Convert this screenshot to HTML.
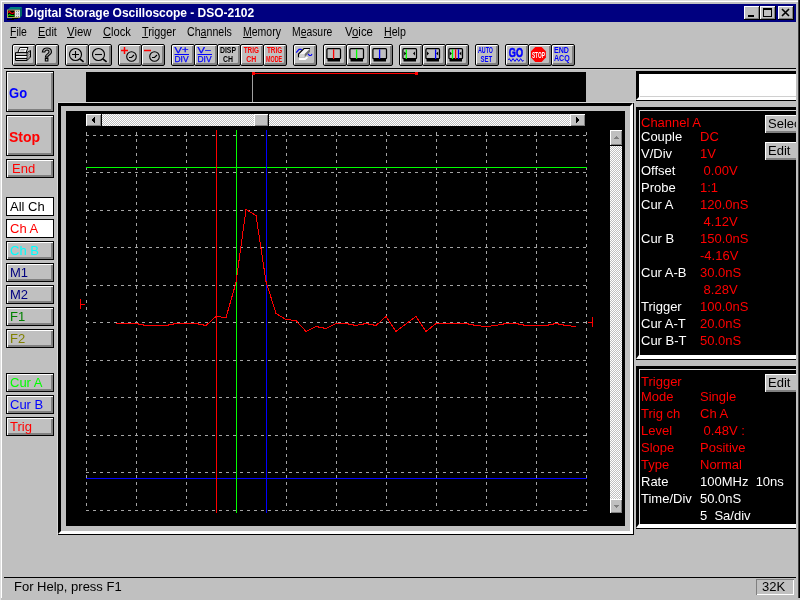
<!DOCTYPE html><html><head><meta charset="utf-8"><title>Digital Storage Oscilloscope - DSO-2102</title><style>
*{box-sizing:border-box;margin:0;padding:0}
html,body{width:800px;height:600px;overflow:hidden;background:#c0c0c0}
body{font-family:"Liberation Sans",sans-serif;position:relative;color:#000}
.abs{position:absolute}
#win{position:absolute;left:0;top:0;width:800px;height:600px;background:#c0c0c0;overflow:hidden;will-change:transform}
#title{position:absolute;left:4px;top:4px;width:792px;height:18px;background:#000080}
#title span{position:absolute;left:21px;letter-spacing:-0.025px;top:1px;font:bold 12px "Liberation Sans",sans-serif;color:#fff;white-space:nowrap;line-height:16px}
.cap{position:absolute;top:6px;width:16px;height:14px;background:#c0c0c0;
 box-shadow:inset -1px -1px 0 #000,inset 1px 1px 0 #fff,inset -2px -2px 0 #808080}
.mi{position:absolute;top:24px;height:16px;font:12px "Liberation Sans",sans-serif;line-height:16px;white-space:nowrap;transform-origin:0 0}
.mi u{text-decoration:underline}
.tb{position:absolute;top:44px;width:24px;height:22px;background:#c0c0c0;border:1px solid #000;border-radius:2px;
 box-shadow:inset 1px 1px 0 #fff,inset -1px -1px 0 #808080,inset -2px -2px 0 #808080}
.tb svg{position:absolute;left:0;top:0}
.lb{position:absolute;left:6px;width:48px;background:#c0c0c0;border:1px solid #000;
 box-shadow:inset 1px 1px 0 #fff,inset -1px -1px 0 #808080,inset -2px -2px 0 #808080;white-space:nowrap}
.lb.big{box-shadow:inset 1px 1px 0 #fff,inset -1px -1px 0 #808080,inset -2px -2px 0 #808080}
.lb.white{background:#fff;box-shadow:none}
.lb span{position:absolute;left:4px;transform-origin:0 0}
.pt{position:absolute;font:13px "Liberation Sans",sans-serif;line-height:16px;white-space:pre;color:#f00}
.pt.w{color:#fff}
.pb{position:absolute;background:#c0c0c0;height:18px;box-shadow:inset 1px 1px 0 #fff,inset 0 -2px 0 #808080;font:13px "Liberation Sans",sans-serif;line-height:17px;overflow:hidden;white-space:nowrap}
</style></head><body><div id="win">
<div class="abs" style="left:0px;top:0px;width:800px;height:1px;background:#dfdfdf"></div>
<div class="abs" style="left:0px;top:0px;width:1px;height:600px;background:#dfdfdf"></div>
<div class="abs" style="left:1px;top:1px;width:798px;height:1px;background:#fff"></div>
<div class="abs" style="left:1px;top:1px;width:1px;height:597px;background:#fff"></div>
<div id="title">
<svg class="abs" style="left:3px;top:3px" width="16" height="14" viewBox="7 7 16 14"><path d="M10.5 7 H22 L20 9.5 H7.5 Z" fill="#008080"/><path d="M20 9.5 L22 7 V15.5 L20 18 Z" fill="#006868"/><rect x="7" y="9.5" width="13" height="8.5" fill="#a8a860"/><rect x="8" y="10.5" width="6.5" height="6.5" fill="#000"/><path d="M8 12.5 L9.5 11.5 L11 13 L12.5 13.5 L14.5 12.5" stroke="#f00" stroke-width="1.1" fill="none"/><path d="M8 16 L9.5 14.5 L11 15.5 L12.5 15.5 L14.5 16" stroke="#0c0" stroke-width="1.1" fill="none"/><rect x="15" y="10.5" width="5" height="6.5" fill="#e0e0e0"/><path d="M16.5 11 V17 M18.5 11 V17" stroke="#808080" stroke-dasharray="1 1.5"/><path d="M7 19.5 H14 M12 18.5 H18" stroke="#000"/></svg>
<span>Digital Storage Oscilloscope - DSO-2102</span></div>
<div class="cap" style="left:744px"><div class="abs" style="left:4px;top:9px;width:6px;height:2px;background:#000"></div></div>
<div class="cap" style="left:760px"><div class="abs" style="left:3px;top:2px;width:9px;height:9px;border:1px solid #000;border-top-width:2px"></div></div>
<div class="cap" style="left:778px"><svg class="abs" style="left:0;top:0" width="16" height="14"><path d="M4 3 L11 10 M11 3 L4 10" stroke="#000" stroke-width="1.6"/></svg></div>
<div class="mi" style="left:10px;transform:scaleX(0.872)"><u>F</u>ile</div>
<div class="mi" style="left:38px;transform:scaleX(0.914)"><u>E</u>dit</div>
<div class="mi" style="left:67px;transform:scaleX(0.948)"><u>V</u>iew</div>
<div class="mi" style="left:103px;transform:scaleX(0.931)"><u>C</u>lock</div>
<div class="mi" style="left:142px;transform:scaleX(0.902)"><u>T</u>rigger</div>
<div class="mi" style="left:187px;transform:scaleX(0.885)">Ch<u>a</u>nnels</div>
<div class="mi" style="left:243px;transform:scaleX(0.875)"><u>M</u>emory</div>
<div class="mi" style="left:292px;transform:scaleX(0.864)">M<u>e</u>asure</div>
<div class="mi" style="left:345px;transform:scaleX(0.951)">V<u>o</u>ice</div>
<div class="mi" style="left:384px;transform:scaleX(0.886)"><u>H</u>elp</div>
<div class="tb" style="left:12px"><svg width="22" height="20" viewBox="0 0 22 20"><path d="M6.8 2.5 H15 L13 7.6 H4.8 Z" fill="#fff" stroke="#000"/><path d="M7.5 4.5 H12.5 M7 6 H11.5" stroke="#909090" stroke-width=".9"/><path d="M2.5 7.6 H14 L17.5 5.5 V12 L14 15.5 H2.5 Z" fill="#c0c0c0" stroke="#000"/><path d="M14 7.6 V15.5" stroke="#000"/><path d="M14.5 9 L17 7 M14.5 11 L17 9 M14.5 13 L17 11" stroke="#606060" stroke-width=".8"/><path d="M2.5 10.5 H14 M2.5 13.5 H14" stroke="#000"/><path d="M3 11.8 H13.5" stroke="#fff" stroke-width="1.4"/></svg></div>
<div class="tb" style="left:35px"><svg width="22" height="20" viewBox="0 0 22 20"><text x="11" y="16" text-anchor="middle" font-family="Liberation Sans, sans-serif" font-weight="bold" font-size="18" fill="#b0b0b0" stroke="#000" stroke-width="1.1">?</text></svg></div>
<div class="tb" style="left:65px"><svg width="22" height="20" viewBox="0 0 22 20"><circle cx="9.5" cy="9.5" r="6" fill="none" stroke="#000" stroke-width="1.1"/><path d="M13.8 13.8 L17.6 16.8" stroke="#000" stroke-width="1.7"/><path d="M6 9.5 H13 M9.5 6 V13" stroke="#000" stroke-width="1.1"/></svg></div>
<div class="tb" style="left:88px"><svg width="22" height="20" viewBox="0 0 22 20"><circle cx="9.5" cy="9.5" r="6" fill="none" stroke="#000" stroke-width="1.1"/><path d="M13.8 13.8 L17.6 16.8" stroke="#000" stroke-width="1.7"/><path d="M6 9.5 H13" stroke="#000" stroke-width="1.1"/></svg></div>
<div class="tb" style="left:118px"><svg width="22" height="20" viewBox="0 0 22 20"><circle cx="12.5" cy="11.5" r="4.8" fill="none" stroke="#000" stroke-width="1.1"/><path d="M10 12.5 H12.5 L15 10" fill="none" stroke="#000" stroke-width="1.1"/><path d="M2 5.5 H9 M5.5 2 V9" stroke="#f00" stroke-width="1.5"/></svg></div>
<div class="tb" style="left:141px"><svg width="22" height="20" viewBox="0 0 22 20"><circle cx="12.5" cy="11.5" r="4.8" fill="none" stroke="#000" stroke-width="1.1"/><path d="M10 12.5 H12.5 L15 10" fill="none" stroke="#000" stroke-width="1.1"/><path d="M2 5.5 H9" stroke="#f00" stroke-width="1.5"/></svg></div>
<div class="tb" style="left:171px"><svg width="22" height="20" viewBox="0 0 22 20"><text x="2.5" y="8" font-family="Liberation Sans, sans-serif" font-size="8.5" stroke="#00f" stroke-width="0.25" fill="#00f" textLength="14.0" lengthAdjust="spacingAndGlyphs">V+</text><path d="M2.5 9.5 H17" stroke="#00f"/><text x="2.5" y="17" font-family="Liberation Sans, sans-serif" font-size="8.5" stroke="#00f" stroke-width="0.25" fill="#00f" textLength="14.0" lengthAdjust="spacingAndGlyphs">DIV</text></svg></div>
<div class="tb" style="left:194px"><svg width="22" height="20" viewBox="0 0 22 20"><text x="2.5" y="8" font-family="Liberation Sans, sans-serif" font-size="8.5" stroke="#00f" stroke-width="0.25" fill="#00f" textLength="14.0" lengthAdjust="spacingAndGlyphs">V&#8722;</text><path d="M2.5 9.5 H17" stroke="#00f"/><text x="2.5" y="17" font-family="Liberation Sans, sans-serif" font-size="8.5" stroke="#00f" stroke-width="0.25" fill="#00f" textLength="14.0" lengthAdjust="spacingAndGlyphs">DIV</text></svg></div>
<div class="tb" style="left:217px"><svg width="22" height="20" viewBox="0 0 22 20"><text x="2" y="8" font-family="Liberation Sans, sans-serif" font-size="8.5" font-weight="bold" fill="#000" textLength="16" lengthAdjust="spacingAndGlyphs">DISP</text><text x="5" y="17" font-family="Liberation Sans, sans-serif" font-size="8.5" font-weight="bold" fill="#000" textLength="10" lengthAdjust="spacingAndGlyphs">CH</text></svg></div>
<div class="tb" style="left:240px"><svg width="22" height="20" viewBox="0 0 22 20"><text x="2.7" y="8" font-family="Liberation Sans, sans-serif" font-size="8.5" font-weight="bold" fill="#f00" textLength="15.3" lengthAdjust="spacingAndGlyphs">TRIG</text><text x="5.2" y="17" font-family="Liberation Sans, sans-serif" font-size="8.5" font-weight="bold" fill="#f00" textLength="10.0" lengthAdjust="spacingAndGlyphs">CH</text></svg></div>
<div class="tb" style="left:263px"><svg width="22" height="20" viewBox="0 0 22 20"><text x="2.9" y="8" font-family="Liberation Sans, sans-serif" font-size="8.5" font-weight="bold" fill="#f00" textLength="15.299999999999999" lengthAdjust="spacingAndGlyphs">TRIG</text><text x="2" y="17" font-family="Liberation Sans, sans-serif" font-size="8.5" font-weight="bold" fill="#f00" textLength="16.2" lengthAdjust="spacingAndGlyphs">MODE</text></svg></div>
<div class="tb" style="left:293px"><svg width="22" height="20" viewBox="0 0 22 20"><path d="M2.2 7.6 L5 4.3 H7 L8.2 5.6" fill="none" stroke="#00f" stroke-width="1.2"/><path d="M14 8.8 L15.4 10.5 H17 L18 9" fill="none" stroke="#00f" stroke-width="1.2"/><path d="M5 14 H11 L13.5 12" stroke="#fff" stroke-width="2" fill="none"/><path d="M10.5 9 L16 3.5 V6.8 L10.5 12.3 Z" fill="#707070"/><path d="M4.5 9 H10.5 V12.3 H4.5 Z" fill="#d4d4d4"/><path d="M10 3.5 H16 L10.5 9 H4.5 Z" fill="#f4f4f4"/><path d="M16 3.5 H10 L4.5 9 V12.3" fill="none" stroke="#000" stroke-width="1.1"/></svg></div>
<div class="tb" style="left:323px"><svg width="22" height="20" viewBox="0 0 22 20"><rect x="2.9" y="3.7" width="13.6" height="10" rx="1" fill="#c0c0c0" stroke="#000" stroke-width="1.25"/><path d="M3.5 14 H16 V16.5 H3.5 Z" fill="#000"/><path d="M9.6 4.4 V14" stroke="#f00" stroke-width="1.3"/></svg></div>
<div class="tb" style="left:346px"><svg width="22" height="20" viewBox="0 0 22 20"><rect x="2.9" y="3.7" width="13.6" height="10" rx="1" fill="#c0c0c0" stroke="#000" stroke-width="1.25"/><path d="M3.5 14 H16 V16.5 H3.5 Z" fill="#000"/><path d="M9.6 4.4 V14" stroke="#0f0" stroke-width="1.3"/></svg></div>
<div class="tb" style="left:369px"><svg width="22" height="20" viewBox="0 0 22 20"><rect x="2.9" y="3.7" width="13.6" height="10" rx="1" fill="#c0c0c0" stroke="#000" stroke-width="1.25"/><path d="M3.5 14 H16 V16.5 H3.5 Z" fill="#000"/><path d="M9.6 4.4 V14" stroke="#00f" stroke-width="1.3"/></svg></div>
<div class="tb" style="left:399px"><svg width="22" height="20" viewBox="0 0 22 20"><rect x="2.9" y="3.7" width="13.6" height="10" rx="1" fill="#c0c0c0" stroke="#000" stroke-width="1.25"/><path d="M3.5 14 H16 V16.5 H3.5 Z" fill="#000"/><path d="M6.3 4.4 V14" stroke="#0f0" stroke-width="1.3"/><path d="M4.2 6.5 V10.5 L6.2 8.5 Z" fill="#000"/><path d="M15 6.5 V10.5 L13 8.5 Z" fill="#000"/></svg></div>
<div class="tb" style="left:422px"><svg width="22" height="20" viewBox="0 0 22 20"><rect x="2.9" y="3.7" width="13.6" height="10" rx="1" fill="#c0c0c0" stroke="#000" stroke-width="1.25"/><path d="M3.5 14 H16 V16.5 H3.5 Z" fill="#000"/><path d="M12.6 4.4 V14" stroke="#00f" stroke-width="1.3"/><path d="M4 6.5 V10.5 L6 8.5 Z" fill="#000"/><path d="M15.2 6.5 V10.5 L13.2 8.5 Z" fill="#000"/></svg></div>
<div class="tb" style="left:445px"><svg width="22" height="20" viewBox="0 0 22 20"><rect x="2.9" y="3.7" width="13.6" height="10" rx="1" fill="#c0c0c0" stroke="#000" stroke-width="1.25"/><path d="M3.5 14 H16 V16.5 H3.5 Z" fill="#000"/><path d="M6.5 4.4 V14" stroke="#0f0" stroke-width="1.3"/><path d="M9.6 4.4 V14" stroke="#f00" stroke-width="1.3"/><path d="M12.5 4.4 V14" stroke="#00f" stroke-width="1.3"/><path d="M3.8 6.5 V10.5 L5.8 8.5 Z" fill="#000"/><path d="M15.3 6.5 V10.5 L13.3 8.5 Z" fill="#000"/></svg></div>
<div class="tb" style="left:475px"><svg width="22" height="20" viewBox="0 0 22 20"><text x="2" y="8" font-family="Liberation Sans, sans-serif" font-size="8.5" font-weight="bold" fill="#00f" textLength="15" lengthAdjust="spacingAndGlyphs">AUTO</text><text x="4.6" y="17" font-family="Liberation Sans, sans-serif" font-size="8.5" font-weight="bold" fill="#00f" textLength="11.6" lengthAdjust="spacingAndGlyphs">SET</text></svg></div>
<div class="tb" style="left:505px"><svg width="22" height="20" viewBox="0 0 22 20"><text x="2.8" y="12.1" font-family="Liberation Sans, sans-serif" font-size="12.3" font-weight="bold" fill="#00f" textLength="14.2" lengthAdjust="spacingAndGlyphs" stroke="#00f" stroke-width="0.6">GO</text><path d="M2.3 15 q0.95 -2.8 1.9 0 t1.9 0 t1.9 0 t1.9 0 t1.9 0 t1.9 0 t1.9 0 t1.9 0" fill="none" stroke="#00f" stroke-width="1"/></svg></div>
<div class="tb" style="left:528px"><svg width="22" height="20" viewBox="0 0 22 20"><path d="M6.3 1.9 H12.6 L16.9 6.3 V12.6 L12.6 17 H6.3 L2 12.6 V6.3 Z" fill="#f00"/><text x="2.9" y="12.6" font-family="Liberation Sans, sans-serif" font-size="8.8" font-weight="bold" fill="#fff" textLength="13.0" lengthAdjust="spacingAndGlyphs">STOP</text></svg></div>
<div class="tb" style="left:551px"><svg width="22" height="20" viewBox="0 0 22 20"><text x="2" y="8" font-family="Liberation Sans, sans-serif" font-size="8.5" font-weight="bold" fill="#00f" textLength="15" lengthAdjust="spacingAndGlyphs">END</text><text x="2" y="16" font-family="Liberation Sans, sans-serif" font-size="8.5" font-weight="bold" fill="#00f" textLength="15.7" lengthAdjust="spacingAndGlyphs">ACQ</text></svg></div>
<div class="abs" style="left:4px;top:68px;width:792px;height:1px;background:#000"></div>
<div class="abs" style="left:4px;top:69px;width:792px;height:1px;background:#d0d0d0"></div>
<div class="lb big" style="top:71px;height:41px"><span style="top:13px;left:2px;color:#00f;font:bold 14px 'Liberation Sans',sans-serif;line-height:16px;transform:scaleX(0.93)">Go</span></div>
<div class="lb big" style="top:115px;height:41px"><span style="top:13px;left:2px;color:#f00;font:bold 14px 'Liberation Sans',sans-serif;line-height:16px">Stop</span></div>
<div class="lb" style="top:159px;height:19px"><span style="top:1px;left:5px;color:#f00;font:13px 'Liberation Sans',sans-serif;line-height:16px">End</span></div>
<div class="lb white" style="top:197px;height:19px"><span style="top:1px;left:3px;color:#000;font:13px 'Liberation Sans',sans-serif;line-height:16px">All Ch</span></div>
<div class="lb white" style="top:219px;height:19px"><span style="top:1px;left:3px;color:#f00;font:13px 'Liberation Sans',sans-serif;line-height:16px">Ch A</span></div>
<div class="lb" style="top:241px;height:19px"><span style="top:1px;left:3px;color:#0ff;font:13px 'Liberation Sans',sans-serif;line-height:16px">Ch B</span></div>
<div class="lb" style="top:263px;height:19px"><span style="top:1px;left:3px;color:#000080;font:13px 'Liberation Sans',sans-serif;line-height:16px">M1</span></div>
<div class="lb" style="top:285px;height:19px"><span style="top:1px;left:3px;color:#000080;font:13px 'Liberation Sans',sans-serif;line-height:16px">M2</span></div>
<div class="lb" style="top:307px;height:19px"><span style="top:1px;left:3px;color:#008000;font:13px 'Liberation Sans',sans-serif;line-height:16px">F1</span></div>
<div class="lb" style="top:329px;height:19px"><span style="top:1px;left:3px;color:#808000;font:13px 'Liberation Sans',sans-serif;line-height:16px">F2</span></div>
<div class="lb" style="top:373px;height:19px"><span style="top:1px;left:3px;color:#0f0;font:13px 'Liberation Sans',sans-serif;line-height:16px">Cur A</span></div>
<div class="lb" style="top:395px;height:19px"><span style="top:1px;left:3px;color:#00f;font:13px 'Liberation Sans',sans-serif;line-height:16px">Cur B</span></div>
<div class="lb" style="top:417px;height:19px"><span style="top:1px;left:3px;color:#f00;font:13px 'Liberation Sans',sans-serif;line-height:16px">Trig</span></div>
<div class="abs" style="left:86px;top:72px;width:500px;height:30px;background:#000"></div>
<div class="abs" style="left:252px;top:73px;width:1px;height:29px;background:#a0a0a0"></div>
<div class="abs" style="left:252px;top:73px;width:166px;height:1px;background:#f00"></div>
<div class="abs" style="left:252px;top:72px;width:3px;height:3px;background:#f00"></div>
<div class="abs" style="left:415px;top:72px;width:3px;height:3px;background:#f00"></div>
<div class="abs" style="left:636px;top:71px;width:164px;height:29px;background:#fff;border-left:3px solid #000;border-top:3px solid #000;border-bottom:3px solid #fff"></div>
<div class="abs" style="left:640px;top:96px;width:160px;height:1px;background:#d0d0d0"></div>
<div class="abs" style="left:636px;top:100px;width:164px;height:1px;background:#000"></div>
<div class="abs" style="left:58px;top:102px;width:577px;height:1px;background:#d8d8d8"></div>
<div class="abs" style="left:57px;top:103px;width:1px;height:432px;background:#d8d8d8"></div>
<div class="abs" style="left:58px;top:103px;width:576px;height:432px;background:#000"></div>
<div class="abs" style="left:58px;top:103px;width:575px;height:431px;background:#c0c0c0;border:3px solid #000;border-right-color:#fff;border-bottom-color:#fff"></div>
<div class="abs" style="left:66px;top:111px;width:559px;height:415px;background:#000"></div>
<svg class="abs" style="left:66px;top:111px" width="559" height="415" viewBox="66 111 559 415" shape-rendering="crispEdges"><defs><pattern id="ck" width="2" height="2" patternUnits="userSpaceOnUse"><rect width="2" height="2" fill="#c0c0c0"/><rect width="1" height="1" fill="#fff"/><rect x="1" y="1" width="1" height="1" fill="#fff"/></pattern></defs><rect x="102" y="114" width="152" height="12" fill="url(#ck)"/><rect x="269" y="114" width="301" height="12" fill="url(#ck)"/><rect x="86" y="114" width="15" height="12" fill="#c0c0c0"/><path d="M86.5 125.5 V114.5 H100.5" stroke="#fff" fill="none"/><path d="M86.5 125.5 H100.5 V114.5" stroke="#808080" fill="none"/><path d="M95 117 V123 L91 120 Z" fill="#000"/><rect x="570" y="114" width="15" height="12" fill="#c0c0c0"/><path d="M570.5 125.5 V114.5 H584.5" stroke="#fff" fill="none"/><path d="M570.5 125.5 H584.5 V114.5" stroke="#808080" fill="none"/><path d="M576 117 V123 L580 120 Z" fill="#000"/><rect x="254" y="114" width="14" height="12" fill="#c0c0c0"/><path d="M254.5 125.5 V114.5 H267.5" stroke="#fff" fill="none"/><path d="M254.5 125.5 H267.5 V114.5" stroke="#808080" fill="none"/><rect x="610" y="146" width="12" height="353" fill="url(#ck)"/><rect x="610" y="130" width="12" height="15" fill="#c0c0c0"/><path d="M610.5 144.5 V130.5 H621.5" stroke="#fff" fill="none"/><path d="M610.5 144.5 H621.5 V130.5" stroke="#808080" fill="none"/><path d="M613 139 H619 L616 136 Z" fill="#808080"/><rect x="610" y="499" width="12" height="14" fill="#c0c0c0"/><path d="M610.5 512.5 V499.5 H621.5" stroke="#fff" fill="none"/><path d="M610.5 512.5 H621.5 V499.5" stroke="#808080" fill="none"/><path d="M613 505 H619 L616 508 Z" fill="#808080"/><g stroke="#a4a4a4" stroke-width="1" stroke-dasharray="3 4" fill="none"><path d="M86.5 132 V511"/><path d="M136.5 132 V511"/><path d="M186.5 132 V511"/><path d="M236.5 132 V511"/><path d="M286.5 132 V511"/><path d="M336.5 132 V511"/><path d="M386.5 132 V511"/><path d="M436.5 132 V511"/><path d="M486.5 132 V511"/><path d="M536.5 132 V511"/><path d="M586.5 132 V511"/><path d="M86 135.5 H587"/><path d="M86 172.5 H587"/><path d="M86 210.5 H587"/><path d="M86 247.5 H587"/><path d="M86 285.5 H587"/><path d="M86 322.5 H587"/><path d="M86 360.5 H587"/><path d="M86 397.5 H587"/><path d="M86 435.5 H587"/><path d="M86 472.5 H587"/><path d="M86 510.5 H587"/></g><path d="M86 167.5 H587" stroke="#0f0"/><path d="M86 478.5 H587" stroke="#00f"/><path d="M216.5 130 V513" stroke="#f00"/><path d="M236.5 130 V513" stroke="#0f0"/><path d="M266.5 130 V513" stroke="#00f"/><path d="M80.5 299 V309 M80 304.5 H85" stroke="#f00"/><path d="M592.5 317 V327 M588 322.5 H592" stroke="#f00"/><polyline points="116,323.5 126,323.5 136,323.5 146,325.5 156,325.5 166,325.5 176,323.5 186,323.5 196,323.5 206,325.5 216,316.5 226,317.5 236,282.5 246,209.5 256,215.5 266,281.5 276,313.5 286,319.5 296,320.5 306,331.5 316,326.5 326,328.5 336,323.5 346,323.5 356,325.5 366,323.5 376,325.5 386,316.5 396,331.5 406,324.0 416,316.5 426,331.5 436,323.5 446,323.5 456,323.5 466,323.5 476,325.5 486,326.5 496,325.5 506,323.5 516,323.5 526,325.5 536,325.5 546,325.5 556,323.5 566,325.5 576,326.5" fill="none" stroke="#f00" stroke-width="1"/></svg>
<div class="abs" style="left:636px;top:107px;width:164px;height:252px;background:#000;border-left:3px solid #000;border-top:3px solid #000;border-bottom:4px solid #fff"></div>
<div class="abs" style="left:639px;top:110px;width:161px;height:1px;background:#d8d8d8"></div>
<div class="abs" style="left:639px;top:110px;width:1px;height:245px;background:#d8d8d8"></div>
<div class="abs" style="left:636px;top:359px;width:164px;height:1px;background:#000"></div>
<div class="abs" style="left:636px;top:366px;width:164px;height:162px;background:#000;border-left:3px solid #000;border-top:3px solid #000;border-bottom:4px solid #fff"></div>
<div class="abs" style="left:639px;top:369px;width:161px;height:1px;background:#d8d8d8"></div>
<div class="abs" style="left:639px;top:369px;width:1px;height:155px;background:#d8d8d8"></div>
<div class="abs" style="left:636px;top:528px;width:164px;height:1px;background:#000"></div>
<div class="pt" style="left:641px;top:115px">Channel A</div>
<div class="pt w" style="left:641px;top:129px">Couple</div>
<div class="pt" style="left:700px;top:129px">DC</div>
<div class="pt w" style="left:641px;top:146px">V/Div</div>
<div class="pt" style="left:700px;top:146px">1V</div>
<div class="pt w" style="left:641px;top:163px">Offset</div>
<div class="pt" style="left:700px;top:163px"> 0.00V</div>
<div class="pt w" style="left:641px;top:180px">Probe</div>
<div class="pt" style="left:700px;top:180px">1:1</div>
<div class="pt w" style="left:641px;top:197px">Cur A</div>
<div class="pt" style="left:700px;top:197px">120.0nS</div>
<div class="pt" style="left:700px;top:214px"> 4.12V</div>
<div class="pt w" style="left:641px;top:231px">Cur B</div>
<div class="pt" style="left:700px;top:231px">150.0nS</div>
<div class="pt" style="left:700px;top:248px">-4.16V</div>
<div class="pt w" style="left:641px;top:265px">Cur A-B</div>
<div class="pt" style="left:700px;top:265px">30.0nS</div>
<div class="pt" style="left:700px;top:282px"> 8.28V</div>
<div class="pt w" style="left:641px;top:299px">Trigger</div>
<div class="pt" style="left:700px;top:299px">100.0nS</div>
<div class="pt w" style="left:641px;top:316px">Cur A-T</div>
<div class="pt" style="left:700px;top:316px">20.0nS</div>
<div class="pt w" style="left:641px;top:333px">Cur B-T</div>
<div class="pt" style="left:700px;top:333px">50.0nS</div>
<div class="pt" style="left:641px;top:374px">Trigger</div>
<div class="pt" style="left:641px;top:389px">Mode</div>
<div class="pt" style="left:700px;top:389px">Single</div>
<div class="pt" style="left:641px;top:406px">Trig ch</div>
<div class="pt" style="left:700px;top:406px">Ch A</div>
<div class="pt" style="left:641px;top:423px">Level</div>
<div class="pt" style="left:700px;top:423px"> 0.48V :</div>
<div class="pt" style="left:641px;top:440px">Slope</div>
<div class="pt" style="left:700px;top:440px">Positive</div>
<div class="pt" style="left:641px;top:457px">Type</div>
<div class="pt" style="left:700px;top:457px">Normal</div>
<div class="pt w" style="left:641px;top:474px">Rate</div>
<div class="pt w" style="left:700px;top:474px">100MHz  10ns</div>
<div class="pt w" style="left:641px;top:491px">Time/Div</div>
<div class="pt w" style="left:700px;top:491px">50.0nS</div>
<div class="pt w" style="left:700px;top:508px">5  Sa/div</div>
<div class="pb" style="left:765px;top:115px;width:40px"><span style="margin-left:3px">Select</span></div>
<div class="pb" style="left:765px;top:142px;width:40px"><span style="margin-left:3px">Edit</span></div>
<div class="pb" style="left:765px;top:374px;width:40px"><span style="margin-left:3px">Edit</span></div>
<div class="abs" style="left:796px;top:22px;width:2px;height:576px;background:#c0c0c0"></div>
<div class="abs" style="left:798px;top:0px;width:1px;height:598px;background:#404040"></div>
<div class="abs" style="left:799px;top:0px;width:1px;height:598px;background:#000"></div>
<div class="abs" style="left:4px;top:577px;width:792px;height:1px;background:#000"></div>
<div class="abs" style="left:14px;top:579px;font:13px 'Liberation Sans',sans-serif;line-height:16px;white-space:nowrap">For Help, press F1</div>
<div class="abs" style="left:756px;top:579px;width:38px;height:16px;box-shadow:inset 1px 1px 0 #808080,inset -1px -1px 0 #fff;font:13px 'Liberation Sans',sans-serif;line-height:16px;padding-left:6px">32K</div>
</div></body></html>
